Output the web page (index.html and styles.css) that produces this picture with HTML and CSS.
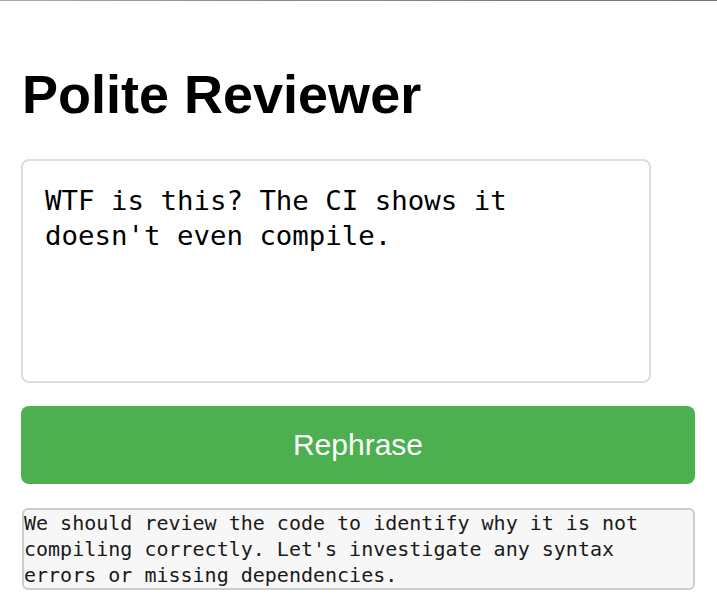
FILE: index.html
```html
<!DOCTYPE html>
<html>
<head>
<meta charset="utf-8">
<link rel="stylesheet" href="styles.css">
</head>
<body>
<div class="topline"></div>
<main class="app">
  <h1 class="title">Polite Reviewer</h1>
  <textarea class="input">WTF is this? The CI shows it doesn't even compile.</textarea>
  <button class="btn">Rephrase</button>
  <pre class="output">We should review the code to identify why it is not
compiling correctly. Let's investigate any syntax
errors or missing dependencies.</pre>
</main>
</body>
</html>
```
FILE: styles.css
```css
html, body {
  margin: 0;
  padding: 0;
  background: #fff;
}
.topline {
  height: 1px;
  background: linear-gradient(to right, #aaa, #888 40%, #777);
}
.app {
  padding: 0 22px 0 21px;
  display: flex;
  flex-direction: column;
  align-items: flex-start;
}
.title {
  font-family: "Liberation Sans", Arial, sans-serif;
  font-weight: bold;
  font-size: 54px;
  margin: 62px 0 0 1px;
  line-height: 62px;
  color: #000;
}
.input {
  margin-top: 34px;
  box-sizing: border-box;
  width: 630px;
  height: 224px;
  border: 2px solid #ddd;
  border-radius: 8px;
  padding: 22px 22px;
  font-family: "DejaVu Sans Mono", monospace;
  font-size: 27.4px;
  line-height: 35px;
  color: #000;
  resize: none;
  outline: none;
}
.btn {
  margin-top: 23px;
  width: 674px;
  height: 78px;
  border: none;
  border-radius: 8px;
  background: #4caf50;
  color: #fff;
  font-family: "Liberation Sans", Arial, sans-serif;
  font-size: 30px;
}
.output {
  margin: 24px 0 0 1px;
  box-sizing: border-box;
  width: 673px;
  background: #f7f7f7;
  border: 2px solid #ccc;
  border-radius: 6px;
  padding: 0;
  font-family: "DejaVu Sans Mono", monospace;
  font-size: 20px;
  line-height: 26px;
  color: #1a1a1a;
  white-space: pre-wrap;
}
```
